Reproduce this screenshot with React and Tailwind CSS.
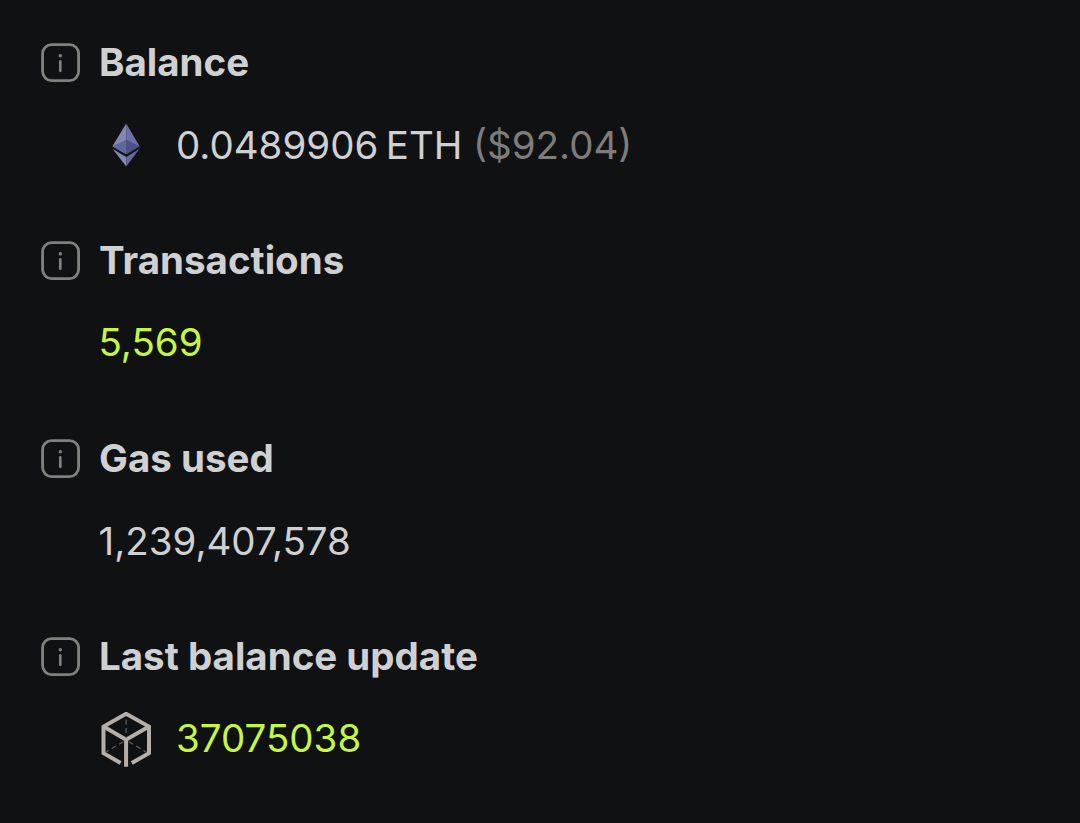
import React from "react";

const InfoIcon = () => (
    <svg className="w-[39px] h-[39px] shrink-0" viewBox="0 0 39 39" fill="none">
        <rect x="1.6" y="1.6" width="36" height="36" rx="9" stroke="#82807d" strokeWidth="2.8" />
        <circle cx="19.3" cy="12.8" r="1.7" fill="#82807d" />
        <path d="M19.3 18.4v9.4" stroke="#82807d" strokeWidth="2.7" strokeLinecap="round" />
    </svg>
);

const EthIcon = () => (
    <svg className="w-[55px] h-[55px] shrink-0" viewBox="0 0 55 55">
        <path d="M27.2 5.4L13.4 28.2l13.8 8.1z" fill="#8288b3" />
        <path d="M27.2 5.4l13.4 22.8-13.4 8.1z" fill="#6b71a2" />
        <path d="M27.2 21.8l-13.8 6.4 13.8 8.1z" fill="#6067a0" />
        <path d="M27.2 21.8l13.4 6.4-13.4 8.1z" fill="#4b5189" />
        <path d="M13.4 30.8l13.8 8.1v9.7z" fill="#8288b3" />
        <path d="M40.6 30.8l-13.4 8.1v9.7z" fill="#656b9e" />
    </svg>
);

const BlockIcon = () => (
    <svg className="w-[55px] h-[55px] shrink-0" viewBox="0 0 55 55" fill="none">
        <g stroke="#b4afaa" strokeWidth="4">
            <path d="M21.6 51L4.5 41.2V14.6L27.1 1.8 50 14.6v26.6L32.8 51" />
            <path d="M4.5 14.6l22.6 13.2L50 14.6M27.1 27.8v27" />
        </g>
        <path d="M27.1 7.6v18M24.4 29.8L6.9 40M29.8 29.8L47.2 40" stroke="#62605e" strokeWidth="1.2" strokeDasharray="5 3.5" />
    </svg>
);

const Row = ({ label, icon, link, children }) => (
    <div className="flex flex-col gap-[28px]">
        <div className="flex items-center gap-[19px]">
            <InfoIcon />
            <h2 className="font-bold">{label}</h2>
        </div>
        <div className="flex items-center gap-[22.5px] ml-[57.5px] h-[55px]">
            {icon}
            {link ? (
                <a className="pb-0.5 text-[#c6f643]">{children}</a>
            ) : (
                <p className="whitespace-pre">{children}</p>
            )}
        </div>
    </div>
);

const App = () => {
    return (
        <div className="h-[823px] bg-[#101113] pl-[41px] pt-[35px] flex flex-col gap-[60px] font-['Inter',sans-serif] text-[38.5px] leading-[55px] text-[#cfd0d2]">
            <Row label="Balance" icon={<EthIcon />}>
                0.0489906<span className="ml-[7.5px]">ETH</span>
                <span className="ml-[10.5px] text-[#7f7d7b]">($92.04)</span>
            </Row>
            <Row label="Transactions" link>5,569</Row>
            <Row label="Gas used">1,239,407,578</Row>
            <Row label="Last balance update" icon={<BlockIcon />} link>37075038</Row>
        </div>
    );
};

export default App;
